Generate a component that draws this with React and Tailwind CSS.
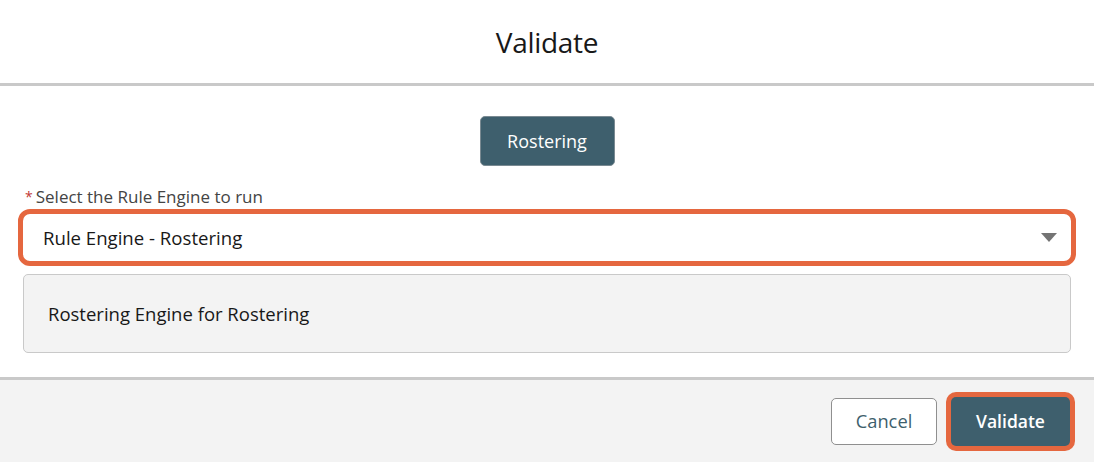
export default function App() {
  const font = { fontFamily: '"Open Sans", "Noto Sans", sans-serif' };
  return (
    <div className="w-[1094px] h-[462px] flex flex-col bg-white overflow-hidden" style={font}>
      <div className="h-[86px] flex items-center justify-center border-b-[3px] border-[#c9c9c9] shrink-0">
        <h1 className="text-[28px] text-[#181818] tracking-[-0.3px] leading-none">Validate</h1>
      </div>
      <div className="flex-1 flex flex-col px-[18px] pt-[30px]">
        <div className="flex justify-center">
          <button className="w-[135px] h-[50px] rounded-[5px] bg-[#3e5f6d] border border-[#7a8a92] text-white text-[18px]">
            Rostering
          </button>
        </div>
        <div className="mt-[21px] pl-[7px] flex items-center text-[17px] text-[#444444] leading-[20px]">
          <span className="text-[#c23934] mr-[3px] text-[14px]">*</span>
          <span>Select the Rule Engine to run</span>
        </div>
        <div className="mt-[2px] h-[57px] rounded-[12px] border-[5px] border-[#e5673f] flex items-center justify-between pl-[20px] pr-[14px]">
          <span className="text-[18.6px] text-[#181818]">Rule Engine - Rostering</span>
          <svg width="16" height="9" viewBox="0 0 16 9">
            <polygon points="0,0 16,0 8,9" fill="#747474" />
          </svg>
        </div>
        <div className="mt-[8px] mx-[5px] h-[79px] rounded-[5px] border border-[#c9c9c9] bg-[#f3f3f3] flex items-center pl-[24px]">
          <span className="text-[18.5px] text-[#181818]">Rostering Engine for Rostering</span>
        </div>
      </div>
      <div className="h-[85px] shrink-0 border-t-[3px] border-[#c9c9c9] bg-[#f3f3f3] flex items-center justify-end pr-[19px] gap-[9px]">
        <button className="w-[106px] h-[47px] rounded-[5px] bg-white border border-[#8f8f8f] text-[#3e5f6d] text-[18.3px]">
          Cancel
        </button>
        <div className="rounded-[10px] bg-[#e5673f] p-[5px]">
          <button className="w-[119px] h-[49px] rounded-[5px] bg-[#3e5f6d] text-white text-[17.5px] font-semibold">
            Validate
          </button>
        </div>
      </div>
    </div>
  );
}
